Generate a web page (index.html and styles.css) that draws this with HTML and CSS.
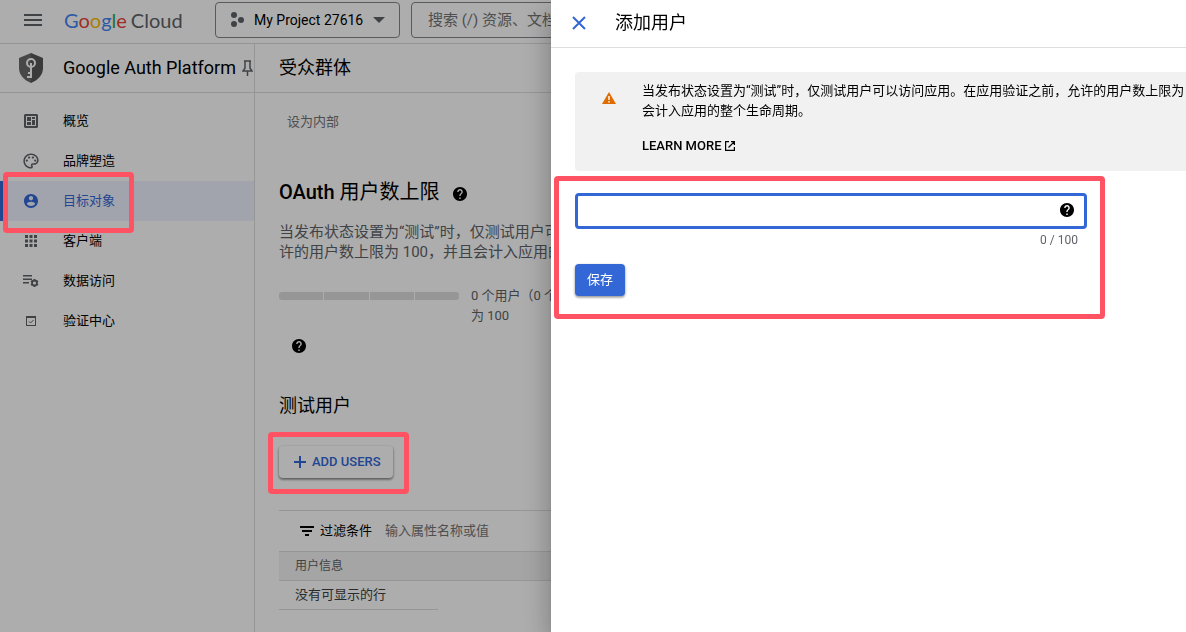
FILE: index.html
```html
<!DOCTYPE html>
<html lang="zh-CN">
<head>
<meta charset="utf-8">
<title>Google Auth Platform</title>
<link rel="stylesheet" href="styles.css">
</head>
<body>
<svg class="defs" aria-hidden="true">
  <symbol id="help" viewBox="2 2 20 20"><path d="M12 2C6.480 2 2 6.480 2 12s4.480 10 10 10 10-4.480 10-10S17.520 2 12 2zm1 17h-2v-2h2v2zm2.070-7.750-.9.920C13.450 12.900 13 13.500 13 15h-2v-.5c0-1.100.450-2.100 1.170-2.830l1.240-1.260c.370-.360.590-.860.590-1.410 0-1.100-.9-2-2-2s-2 .9-2 2H8c0-2.210 1.790-4 4-4s4 1.790 4 4c0 .880-.360 1.680-.930 2.250z"/></symbol>
</svg>

<header class="topbar">
  <button class="icon-button menu" aria-label="导航菜单">
    <svg width="18" height="12" viewBox="0 0 18 12"><path d="M0 0h18v2H0zM0 5h18v2H0zM0 10h18v2H0z"/></svg>
  </button>
  <a class="brand" href="#" aria-label="Google Cloud"><span class="g-blue">G</span><span class="g-red">o</span><span class="g-yellow">o</span><span class="g-blue">g</span><span class="g-green">l</span><span class="g-red">e</span><span class="g-cloud">Cloud</span></a>
  <button class="project">
    <svg class="muted" width="14" height="16" viewBox="0 0 14 16"><circle cx="4" cy="3" r="3"/><circle cx="4" cy="12" r="3"/><circle cx="11" cy="8" r="3"/></svg>
    <span>My Project 27616</span>
    <svg class="muted" width="12" height="6" viewBox="0 0 12 6"><path d="M0 0h12L6 6z"/></svg>
  </button>
  <input class="search" type="search" placeholder="搜索 (/) 资源、文档、产品等" aria-label="搜索">
</header>

<div class="layout">
  <aside class="sidebar">
    <div class="product">
      <svg class="product-logo" width="24" height="30" viewBox="0 0 24 30">
        <path fill="#6b6b6b" d="M12 0 0 5v10c0 7 5 12 12 15z"/><path fill="#575757" d="M12 0l12 5v10c0 7-5 12-12 15z"/>
        <circle cx="12" cy="10" r="4" fill="none" stroke="#fff" stroke-width="2"/>
        <path fill="#fff" d="M11 10h2v15H8v-2h3v-2H9v-2h2z"/>
      </svg>
      <span class="product-name">Google Auth Platform</span>
      <button class="icon-button pin" aria-label="固定">
        <svg width="11" height="16" viewBox="0 0 11 16"><path fill="none" stroke="currentColor" stroke-width="1.500" d="M2 1h7M3 1v7l-2 3h9L8 8V1M5.500 11v5"/></svg>
      </button>
    </div>
    <nav class="nav">
      <a href="#"><svg width="14" height="14" viewBox="0 0 14 14"><path fill-rule="evenodd" d="M1 0h12l1 1v12l-1 1H1l-1-1V1zM2 2v10h10V2zM3 3h4v4H3zM8 3h3v2H8zM8 6h3v5H8zM3 8h4v3H3z"/></svg>概览</a>
      <a href="#"><svg width="16" height="16" viewBox="1.500 1.500 21 21"><path d="M12 22C6.490 22 2 17.510 2 12S6.490 2 12 2s10 4.040 10 9c0 3.310-2.690 6-6 6h-1.770c-.280 0-.5.220-.5.500 0 .120.050.230.130.330.410.470.640 1.060.640 1.670A2.500 2.500 0 0 1 12 22zm0-18c-4.410 0-8 3.590-8 8s3.590 8 8 8c.280 0 .5-.220.500-.5a.54.54 0 0 0-.140-.350c-.410-.460-.630-1.050-.630-1.650a2.500 2.500 0 0 1 2.500-2.500H16c2.210 0 4-1.790 4-4 0-3.860-3.590-7-8-7z"/><circle cx="6.500" cy="11.500" r="1.500"/><circle cx="9.500" cy="7.500" r="1.500"/><circle cx="14.500" cy="7.500" r="1.500"/><circle cx="17.500" cy="11.500" r="1.500"/></svg>品牌塑造</a>
      <a href="#" class="active" aria-current="page"><svg width="14" height="14" viewBox="2 2 20 20"><path d="M12 2C6.480 2 2 6.480 2 12s4.480 10 10 10 10-4.480 10-10S17.520 2 12 2zm0 3c1.660 0 3 1.340 3 3s-1.340 3-3 3-3-1.340-3-3 1.340-3 3-3zm0 14.200c-2.500 0-4.710-1.280-6-3.220.030-1.990 4-3.080 6-3.080 1.990 0 5.970 1.090 6 3.080-1.290 1.940-3.500 3.220-6 3.220z"/></svg>目标对象<span class="marker marker-nav"></span></a>
      <a href="#"><svg width="12" height="12" viewBox="0 0 12 12"><path d="M0 0h3v3H0zM4.500 0h3v3h-3zM9 0h3v3H9zM0 4.500h3v3H0zM4.500 4.500h3v3h-3zM9 4.500h3v3H9zM0 9h3v3H0zM4.500 9h3v3h-3zM9 9h3v3H9z"/></svg>客户端</a>
      <a href="#"><svg width="16" height="14" viewBox="0 0 16 14"><path d="M0 1h9v1.500H0zM0 4.500h9V6H0zM0 8h6v1.500H0z"/><circle cx="11.500" cy="9" r="2.500" fill="none" stroke="currentColor" stroke-width="1.800"/><path fill="none" stroke="currentColor" stroke-width="1.800" d="M11.500 5v1.500M11.500 11.500V13M8 7l1.300.7M13.700 10.300 15 11M8 11l1.300-.7M13.700 7.700 15 7"/></svg>数据访问</a>
      <a href="#"><svg width="10" height="10" viewBox="0 0 10 10"><path fill-rule="evenodd" d="M0 0h10v10H0zM1 2v7h8V2z"/><path fill="none" stroke="currentColor" d="M3 5.500 4.500 7 7.500 4"/></svg>验证中心</a>
    </nav>
  </aside>

  <main class="main">
    <h1 class="page-title">受众群体</h1>
    <div class="content">
      <button class="internal" disabled>设为内部</button>
      <h2 class="cap-title">OAuth <span class="cjk">用户数上限</span><svg class="help" width="14" height="14"><use href="#help"/></svg></h2>
      <p class="cap-text">当发布状态设置为“测试”时，仅测试用户可以访问应用。在应用验证之前，允许的用户数上限为 100，并且会计入应用的整个生命周期。</p>
      <div class="quota">
        <div class="meter"><i></i><i></i><i></i><i></i></div>
        <div class="quota-text">0 个用户（0 个测试，0 个其他），上限<br>为 100</div>
      </div>
      <svg class="help quota-help" width="14" height="14"><use href="#help"/></svg>
      <h2 class="section-title">测试用户</h2>
      <div class="add-row">
        <button class="add-users">
          <svg width="12" height="12" viewBox="0 0 12 12"><path d="M5 0h2v5h5v2H7v5H5V7H0V5h5z"/></svg>ADD USERS
        </button>
        <span class="marker marker-add"></span>
      </div>
      <section class="users">
        <div class="filter">
          <svg width="14" height="10" viewBox="0 0 14 10"><path d="M0 0h14v2H0zM2 4h10v2H2zM5 8h4v2H5z"/></svg>
          <label for="filter">过滤条件</label>
          <input id="filter" type="text" placeholder="输入属性名称或值">
        </div>
        <table>
          <thead><tr><th scope="col">用户信息</th></tr></thead>
          <tbody><tr><td><span>没有可显示的行</span></td></tr></tbody>
        </table>
      </section>
    </div>
  </main>
</div>

<div class="scrim"></div>

<aside class="drawer" role="dialog" aria-labelledby="drawer-title">
  <header class="drawer-header">
    <button class="icon-button close" aria-label="关闭">
      <svg width="14" height="14" viewBox="0 0 14 14"><path fill="none" stroke="currentColor" stroke-width="2" d="M1 1l12 12M13 1 1 13"/></svg>
    </button>
    <h2 id="drawer-title">添加用户</h2>
  </header>
  <div class="drawer-body">
    <div class="notice">
      <svg width="14" height="12" viewBox="0 0 14 12"><path fill="#e06c00" d="M7 0l7 12H0z"/><path fill="#fff" d="M6.300 4h1.400v4H6.300zM6.300 9h1.400v1.400H6.300z"/></svg>
      <div>
        <p>当发布状态设置为“测试”时，仅测试用户可以访问应用。在应用验证之前，允许的用户数上限为<br>会计入应用的整个生命周期。</p>
        <a href="#" class="learn">LEARN MORE <svg width="10" height="10" viewBox="0 0 10 10"><path fill="none" stroke="currentColor" stroke-width="1.200" d="M4 .6H.6v8.800h8.800V6M6 .6h3.400V4M9.400.6 3.500 6.500"/></svg></a>
      </div>
    </div>
    <form class="form">
      <div class="field">
        <input type="text" aria-label="用户电子邮件地址">
        <svg class="help" width="14" height="14"><use href="#help"/></svg>
      </div>
      <div class="counter">0 / 100</div>
      <button type="button" class="save">保存</button>
      <span class="marker marker-form"></span>
    </form>
  </div>
</aside>
</body>
</html>
```

FILE: styles.css
```css
* { box-sizing: border-box; }

body {
  margin: 0;
  height: 100vh;
  overflow: hidden;
  display: flex;
  flex-direction: column;
  background: #fff;
  color: #000;
  font: 13px/20px Roboto, "Noto Sans CJK SC", sans-serif;
}

button, input { font: inherit; color: inherit; }
button { padding: 0; border: 0; background: none; cursor: pointer; }
a { color: inherit; text-decoration: none; }
h1, h2, p { margin: 0; font-weight: 400; }
svg { display: block; flex: none; fill: currentColor; }
.defs { position: absolute; width: 0; height: 0; }
.icon-button { display: flex; align-items: center; justify-content: center; }
.muted { color: #5f6368; }

/* Top bar */
.topbar {
  display: flex;
  align-items: center;
  height: 44px;
  flex: none;
  padding: 0 0 4px 24px;
  border-bottom: 1px solid #dedede;
}
.menu { width: 18px; color: #5f6368; }
.brand {
  width: 151px;
  flex: none;
  padding-left: 22px;
  font: 20px/24px Lato, sans-serif;
  white-space: nowrap;
}
.g-blue { color: #4285f4; }
.g-red { color: #ea4335; }
.g-yellow { color: #fbbc04; }
.g-green { color: #34a853; }
.g-cloud { margin-left: 4px; color: #5f6368; }
.project {
  display: flex;
  align-items: center;
  gap: 10px;
  width: 185px;
  height: 36px;
  flex: none;
  margin-left: 22px;
  padding: 0 14px;
  border: 1px solid #80868b;
  border-radius: 4px;
  font-size: 14px;
  white-space: nowrap;
}
.search {
  flex: 1;
  height: 36px;
  margin: 0 16px 0 11px;
  padding: 0 16px;
  border: 1px solid #80868b;
  border-radius: 4px;
  background: none;
  font-size: 15px;
}
::placeholder { color: #757575; opacity: 1; }

/* Sidebar */
.layout { display: flex; flex: 1; min-height: 0; }
.sidebar { width: 255px; flex: none; border-right: 1px solid #dedede; }
.product {
  display: flex;
  align-items: center;
  height: 49px;
  padding-left: 19px;
  border-bottom: 1px solid #dedede;
}
.product-name { margin: 0 6px 0 20px; font-size: 18px; white-space: nowrap; }
.pin { color: #5f6368; }
.nav { padding-top: 8px; }
.nav a {
  position: relative;
  display: grid;
  grid-template-columns: 14px 1fr;
  column-gap: 25px;
  padding-left: 24px;
  align-items: center;
  height: 40px;
}
.nav svg { justify-self: center; color: #5f6368; }
.nav .active { background: #edf2fe; color: #3367d6; box-shadow: inset 3px 0 #3367d6; }
.nav .active svg { color: #3367d6; }

/* Main column */
.main { flex: 1; min-width: 0; }
.page-title {
  height: 49px;
  padding-left: 24px;
  border-bottom: 1px solid #dedede;
  font-size: 18px;
  line-height: 48px;
}
.content { padding: 11px 24px 0; }
.internal { display: block; height: 36px; padding: 0 8px; color: #757575; }
.cap-title {
  display: flex;
  align-items: center;
  margin: 40px 0 18px;
  font-size: 20px;
  font-weight: 500;
  line-height: 24px;
  white-space: pre;
}
.cjk { font-weight: 400; }
.cap-title .help { margin: 4px 0 0 13px; }
.cap-text { max-width: 512px; color: #5f6368; font-size: 15px; }
.quota { display: flex; gap: 12px; margin-top: 24px; color: #5f6368; }
.meter { display: flex; gap: 1px; width: 180px; height: 8px; margin-top: 6px; border-radius: 3px; overflow: hidden; }
.meter i { flex: 1; background: #dedede; }
.quota-help { margin: 13px 0 0 13px; }
.section-title { margin: 41px 0 28px; font-size: 18px; line-height: 24px; }
.add-row { position: relative; width: max-content; }
.add-users {
  display: flex;
  align-items: center;
  gap: 6px;
  height: 32px;
  padding: 0 12px 0 15px;
  border-radius: 4px;
  color: #3367d6;
  font-weight: 500;
  box-shadow: 0 1px 3px rgba(0, 0, 0, .4), 0 2px 2px rgba(0, 0, 0, .2);
  background: #fff;
}
.users { margin-top: 32px; border-top: 1px solid #dedede; }
.filter { display: flex; align-items: center; height: 40px; padding-left: 21px; }
.filter label { margin: 0 13px 0 6px; }
.filter input { flex: 1; padding: 0; border: 0; background: none; }
table { width: 100%; border-spacing: 0; text-align: left; }
th {
  height: 30px;
  padding: 0 16px;
  border: solid #dedede;
  border-width: 1px 0;
  background: #f3f3f3;
  color: #5f6368;
  font-size: 12px;
  font-weight: 400;
}
td { padding: 0; color: #3c4043; }
td span { display: block; width: 159px; padding: 4px 0 4px 16px; border-bottom: 1px solid #dedede; }

/* Drawer */
.scrim { position: fixed; inset: 0; z-index: 1; background: rgba(0, 0, 0, .32); }
.drawer {
  position: fixed;
  top: 0;
  right: 0;
  bottom: 0;
  z-index: 2;
  width: 635px;
  max-width: 100%;
  background: #fff;
  box-shadow: 0 8px 10px -5px rgba(0, 0, 0, .2), 0 16px 24px 2px rgba(0, 0, 0, .14), 0 6px 30px 5px rgba(0, 0, 0, .12);
}
.drawer-header {
  display: flex;
  align-items: center;
  gap: 29px;
  height: 48px;
  padding: 0 0 2px 21px;
  border-bottom: 1px solid #dedede;
}
.drawer-header h2 { font-size: 18px; line-height: 24px; }
.close { color: #3367d6; }
.drawer-body { padding: 24px 0 0 24px; }
.notice {
  display: flex;
  gap: 26px;
  padding: 9px 0 15px 27px;
  border-radius: 4px 0 0 4px;
  background: #f1f1f1;
  white-space: nowrap;
}
.notice > svg { margin-top: 11px; }
.learn { display: flex; align-items: center; gap: 4px; margin-top: 15px; font-weight: 500; }
.form { position: relative; width: 512px; max-width: 100%; margin-top: 22px; }
.field { position: relative; }
.field input {
  display: block;
  width: 100%;
  height: 36px;
  padding: 0 40px 0 12px;
  border: 3px solid #3367d6;
  border-radius: 4px;
  outline: 0;
}
.field .help { position: absolute; top: 10px; right: 13px; }
.counter { padding: 1px 9px 0 0; color: #5f6368; font-size: 12px; text-align: right; }
.save {
  height: 32px;
  margin-top: 14px;
  padding: 0 12px;
  border-radius: 4px;
  background: #3367d6;
  color: #fff;
  box-shadow: 0 1px 3px rgba(0, 0, 0, .35), 0 2px 2px rgba(0, 0, 0, .15);
}

/* Red highlight frames */
.marker {
  position: absolute;
  z-index: 3;
  border: 5px solid #ff5263;
  border-radius: 4px;
  pointer-events: none;
}
.marker-nav { left: 3px; top: -9px; width: 131px; height: 61px; }
.marker-add { inset: -14px -16px -16px -11px; }
.marker-form { inset: -17px -18px -23px -21px; }
```
